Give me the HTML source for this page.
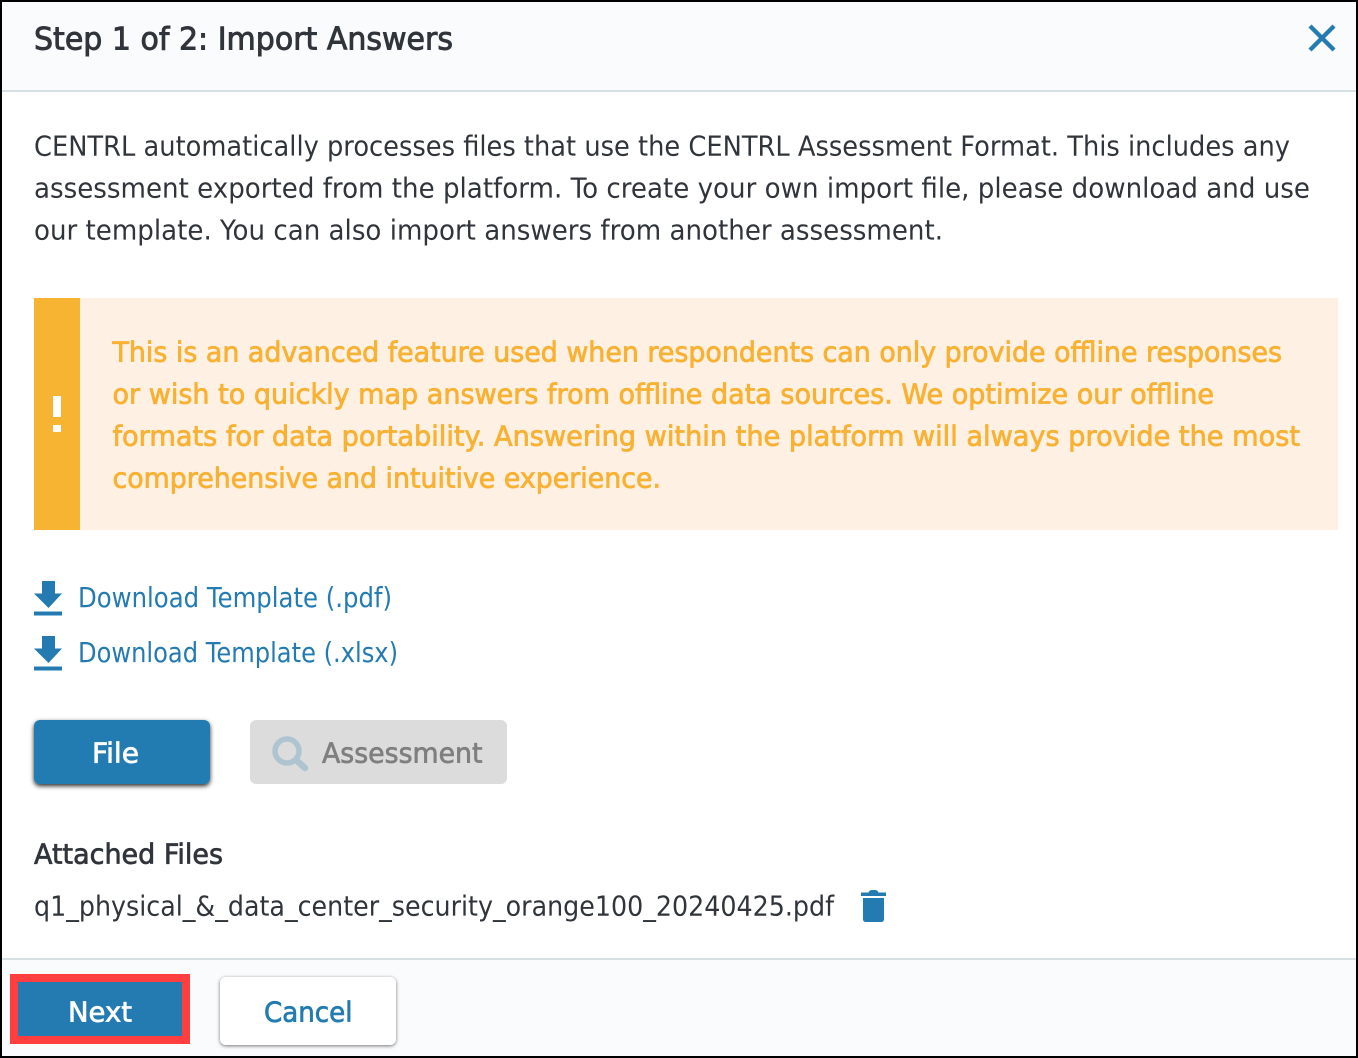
<!DOCTYPE html>
<html>
<head>
<meta charset="utf-8">
<style>
html,body{margin:0;padding:0;background:#fff}
svg{display:block}
text{font-family:"DejaVu Sans","Liberation Sans",sans-serif}
.b{font-size:27.5px;fill:#30353b}
.w{font-size:27.5px;fill:#f8b133;stroke:#f8b133;stroke-width:.75}
.l{font-size:27.5px;fill:#237bb1}
</style>
</head>
<body>
<svg width="1358" height="1058" viewBox="0 0 1358 1058" xmlns="http://www.w3.org/2000/svg">
<defs>
<filter id="sh" x="-10%" y="-20%" width="120%" height="150%"><feDropShadow dx="0" dy="2" stdDeviation="2.500" flood-color="#000" flood-opacity=".85"/></filter>
<filter id="sh2" x="-10%" y="-20%" width="120%" height="150%"><feDropShadow dx="0" dy="1" stdDeviation="1.800" flood-color="#000" flood-opacity=".55"/></filter>
</defs>
<rect width="1358" height="1058" fill="#fff"/>
<rect x="2" y="2" width="1354" height="88" fill="#fafbfd"/>
<rect x="2" y="90" width="1354" height="2" fill="#d6dfe3"/>
<rect x="2" y="960" width="1354" height="96" fill="#fafbfd"/>
<rect x="2" y="958" width="1354" height="2" fill="#d6dfe3"/>

<text x="34" y="49.500" font-size="31" fill="#30353b" stroke="#30353b" stroke-width=".9" textLength="419" lengthAdjust="spacingAndGlyphs">Step 1 of 2: Import Answers</text>
<path d="M1310 26 L1334 50 M1334 26 L1310 50" stroke="#237bb1" stroke-width="4.300" fill="none"/>

<text class="b" x="34" y="155.500" textLength="1256" lengthAdjust="spacingAndGlyphs">CENTRL automatically processes files that use the CENTRL Assessment Format. This includes any</text>
<text class="b" x="34" y="197.500" textLength="1276" lengthAdjust="spacingAndGlyphs">assessment exported from the platform. To create your own import file, please download and use</text>
<text class="b" x="34" y="239.500" textLength="909" lengthAdjust="spacingAndGlyphs">our template. You can also import answers from another assessment.</text>

<rect x="34" y="298" width="1304" height="232" fill="#fef0e2"/>
<rect x="34" y="298" width="46" height="232" fill="#f7b432"/>
<rect x="53" y="396" width="8" height="21" fill="#fff"/>
<rect x="53" y="425" width="8" height="7" fill="#fff"/>
<text class="w" x="112.500" y="361.500" textLength="1169.500" lengthAdjust="spacingAndGlyphs">This is an advanced feature used when respondents can only provide offline responses</text>
<text class="w" x="112.500" y="403.500" textLength="1101.500" lengthAdjust="spacingAndGlyphs">or wish to quickly map answers from offline data sources. We optimize our offline</text>
<text class="w" x="112.500" y="445.500" textLength="1187.500" lengthAdjust="spacingAndGlyphs">formats for data portability. Answering within the platform will always provide the most</text>
<text class="w" x="112.500" y="487.500" textLength="548.500" lengthAdjust="spacingAndGlyphs">comprehensive and intuitive experience.</text>

<path d="M42 581H55V593.500H62L48.500 608L34 593.500H42Z M34 611.500H62V615.500H34Z" fill="#237bb1"/>
<text class="l" x="78" y="607" textLength="314" lengthAdjust="spacingAndGlyphs">Download Template (.pdf)</text>
<path d="M42 636H55V648.500H62L48.500 663L34 648.500H42Z M34 666.500H62V670.500H34Z" fill="#237bb1"/>
<text class="l" x="78" y="662" textLength="320" lengthAdjust="spacingAndGlyphs">Download Template (.xlsx)</text>

<rect x="34" y="720" width="176" height="64" rx="6" fill="#237bb1" filter="url(#sh)"/>
<text x="92" y="762.500" font-size="27.500" fill="#fff" stroke="#fff" stroke-width=".7" textLength="47" lengthAdjust="spacingAndGlyphs">File</text>
<rect x="250" y="720" width="257" height="64" rx="6" fill="#dcdcdc"/>
<circle cx="287" cy="751" r="12" fill="none" stroke="#aec4d0" stroke-width="5.500"/>
<path d="M296 760L305 768" stroke="#aec4d0" stroke-width="6.500" stroke-linecap="round"/>
<text x="322" y="762.500" font-size="27.500" fill="#7f7f7f" stroke="#7f7f7f" stroke-width=".7" textLength="160.500" lengthAdjust="spacingAndGlyphs">Assessment</text>

<text x="34" y="863.500" font-size="27.500" fill="#30353b" stroke="#30353b" stroke-width=".7" textLength="189" lengthAdjust="spacingAndGlyphs">Attached Files</text>
<text class="b" x="34" y="915.500" textLength="800" lengthAdjust="spacingAndGlyphs">q1_physical_&amp;_data_center_security_orange100_20240425.pdf</text>
<path d="M861 892.500H868.500Q869.500 890 872 890H875Q877.500 890 878.500 892.500H886V896H861Z M863 898H884V919Q884 922 881 922H866Q863 922 863 919Z" fill="#237bb1"/>

<rect x="10" y="974" width="180" height="70" fill="#ff3f3f"/>
<rect x="18" y="982" width="164" height="54" fill="#237bb1"/>
<text x="68" y="1021.500" font-size="27.500" fill="#fff" stroke="#fff" stroke-width=".7" textLength="64" lengthAdjust="spacingAndGlyphs">Next</text>
<rect x="220" y="977" width="176" height="68" rx="6" fill="#fff" filter="url(#sh2)"/>
<text x="264" y="1021.500" font-size="27.500" fill="#237bb1" stroke="#237bb1" stroke-width=".7" textLength="88.500" lengthAdjust="spacingAndGlyphs">Cancel</text>

<rect x="0" y="0" width="1358" height="2" fill="#000"/>
<rect x="0" y="1056" width="1358" height="2" fill="#000"/>
<rect x="0" y="0" width="2" height="1058" fill="#000"/>
<rect x="1356" y="0" width="2" height="1058" fill="#000"/>
</svg>
</body>
</html>
